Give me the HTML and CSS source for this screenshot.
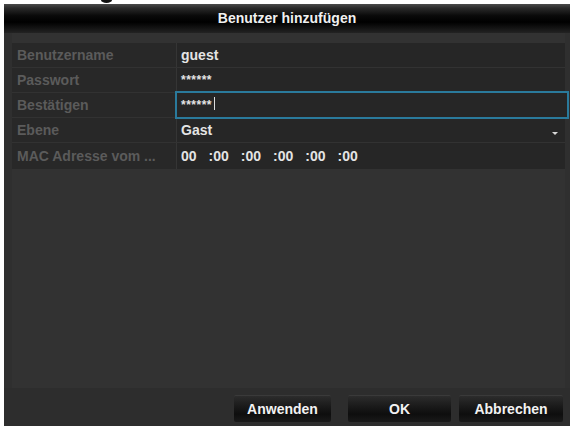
FILE: index.html
```html
<!DOCTYPE html>
<html lang="de">
<head>
<meta charset="utf-8">
<title>Benutzer hinzufügen</title>
<link rel="stylesheet" href="styles.css">
</head>
<body>
<div class="blob"></div>
<div class="window">
  <div class="titlebar">Benutzer hinzufügen</div>
  <div class="body">
    <div class="panel">
      <div class="row">
        <div class="label">Benutzername</div>
        <div class="value">guest</div>
      </div>
      <div class="row">
        <div class="label">Passwort</div>
        <div class="value stars">******</div>
      </div>
      <div class="row">
        <div class="label">Bestätigen</div>
        <div class="value stars focused">******<span class="caret"></span></div>
      </div>
      <div class="row">
        <div class="label">Ebene</div>
        <div class="value select">Gast<span class="arrow"></span></div>
      </div>
      <div class="row">
        <div class="label">MAC Adresse vom ...</div>
        <div class="value mac">
          <span>00</span><span>:00</span><span>:00</span><span>:00</span><span>:00</span><span>:00</span>
        </div>
      </div>
    </div>
  </div>
  <div class="footer">
    <button class="btn btn-apply">Anwenden</button>
    <button class="btn btn-ok">OK</button>
    <button class="btn btn-cancel">Abbrechen</button>
  </div>
</div>
</body>
</html>
```
FILE: styles.css
```css
html, body {
  margin: 0;
  padding: 0;
  background: #ffffff;
  width: 570px;
  height: 426px;
  overflow: hidden;
  font-family: "Liberation Sans", Arial, sans-serif;
}

body {
  position: relative;
}

.blob {
  position: absolute;
  left: 101px;
  top: -3px;
  width: 11px;
  height: 6px;
  border-radius: 50%;
  background: #111;
}

.window {
  margin: 4px 0 0 4px;
  width: 566px;
  height: 422px;
  background: #2f2f2f;
  display: flex;
  flex-direction: column;
}

.titlebar {
  height: 29px;
  flex: none;
  display: flex;
  align-items: center;
  justify-content: center;
  color: #f0f0f0;
  font-size: 14px;
  font-weight: bold;
  padding-bottom: 2px;
  box-sizing: border-box;
  background: linear-gradient(to bottom, #4a4a4a 0%, #2a2a2a 14%, #0a0a0a 40%, #000 62%, #151515 85%, #232323 100%);
}

.body {
  flex: none;
  height: 355px;
  box-sizing: border-box;
  padding: 0 5px 0 8px;
}

.panel {
  height: 100%;
  background: #323232;
  padding-top: 10px;
  box-sizing: border-box;
  display: flex;
  flex-direction: column;
  gap: 1px;
}

.row {
  display: flex;
  height: 24px;
  gap: 1px;
  background: #353535;
}

.row:last-child {
  height: 26px;
}

.label {
  width: 164px;
  flex: none;
  background: #282828;
  color: #5b5b5b;
  font-size: 14px;
  font-weight: bold;
  display: flex;
  align-items: center;
  padding-left: 5px;
  box-sizing: border-box;
  white-space: nowrap;
  overflow: hidden;
}

.value {
  flex: 1;
  background: #262626;
  color: #e4e4e4;
  font-size: 14px;
  font-weight: bold;
  display: flex;
  align-items: center;
  padding-left: 4px;
  position: relative;
}

.stars {
  font-size: 12px;
  letter-spacing: 0.5px;
  align-items: flex-start;
  padding-top: 5px;
  box-sizing: border-box;
}

.focused {
  box-shadow: 0 0 0 2px #2a7a9c;
  margin-right: -2px;
  z-index: 1;
}

.caret {
  display: inline-block;
  width: 1px;
  height: 13px;
  margin-left: 2px;
  margin-top: -1px;
  background: #dcdcdc;
}

.arrow {
  position: absolute;
  right: 7px;
  top: 14px;
  width: 0;
  height: 0;
  border-left: 3px solid transparent;
  border-right: 3px solid transparent;
  border-top: 3px solid #d8d8d8;
}

.mac {
  gap: 12px;
  padding-left: 4px;
}

.footer {
  flex: 1;
  display: flex;
  justify-content: flex-end;
  align-items: flex-start;
  padding: 7px 7px 0 0;
  gap: 8px;
  background: #2d2d2d;
}

.btn {
  height: 27px;
  border: none;
  border-top: 1px solid #3a3a3a;
  border-radius: 2px;
  color: #f2f2f2;
  font-family: "Liberation Sans", Arial, sans-serif;
  font-size: 14px;
  font-weight: bold;
  background: linear-gradient(to bottom, #2c2c2c 0%, #1a1a1a 40%, #0e0e0e 70%, #1a1a1a 100%);
  padding: 0;
}

.btn-apply {
  width: 97px;
  margin-right: 9px;
}

.btn-ok {
  width: 103px;
}

.btn-cancel {
  width: 104px;
}
```
